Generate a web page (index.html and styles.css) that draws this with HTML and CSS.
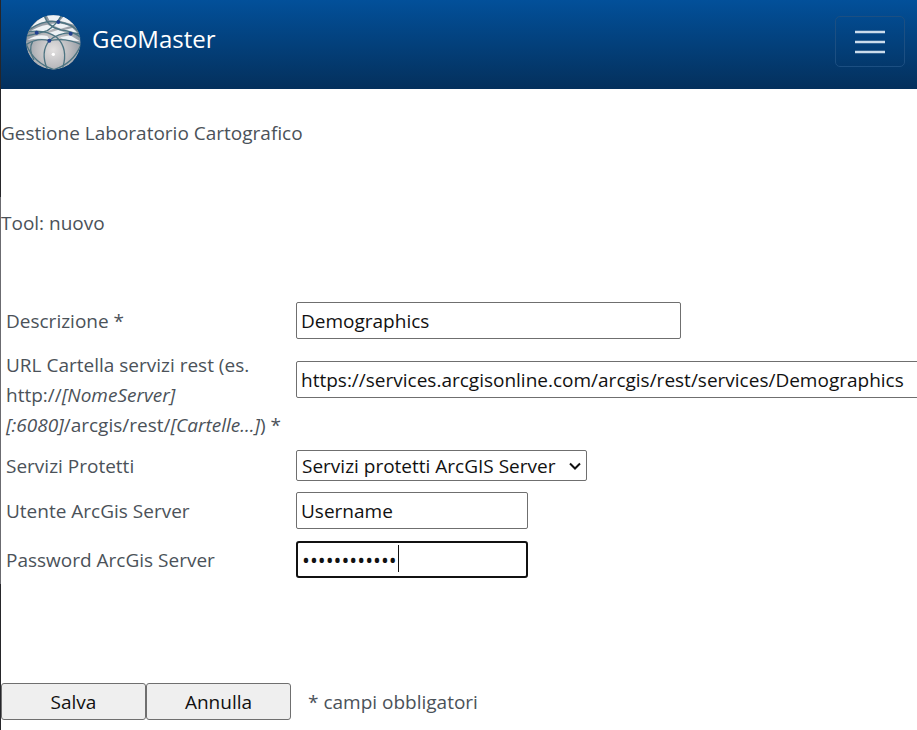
FILE: index.html
```
<!DOCTYPE html>
<html lang="it">
<head>
    <meta charset="UTF-8">
    <meta name="viewport" content="width=device-width, initial-scale=1.0">
    <title>GeoMaster</title>
    <link rel="stylesheet" href="styles.css">
</head>
<body>
    <header class="navbar">
        <a class="brand" href="#">
            <svg class="logo" viewBox="0 0 180 180" aria-hidden="true">
                <defs>
                    <radialGradient id="globe" cx="50%" cy="64%" r="60%">
                        <stop offset="0" stop-color="#e2e0e0"/>
                        <stop offset="0.5" stop-color="#bcbcbf"/>
                        <stop offset="1" stop-color="#86919c"/>
                    </radialGradient>
                    <clipPath id="disc"><circle cx="88" cy="91" r="82"/></clipPath>
                </defs>
                <g clip-path="url(#disc)">
                    <circle cx="88" cy="91" r="82" fill="url(#globe)"/>
                    <!-- light patches between the meridians -->
                    <path d="M22 46Q40 22 60 14L70 28Q45 32 22 46ZM68 10H112L100 27L76 25ZM78 36L104 33L140 42L110 50ZM120 12L150 38L108 26ZM14 62Q40 42 70 38L94 48L66 60L36 56ZM112 56L145 48L164 66L138 60ZM74 63L102 54L130 64L98 72ZM10 84Q40 64 70 72L76 82Q40 78 10 84ZM108 76L138 70L168 88L122 84Z" fill="#eef2f5"/>
                    <g fill="none" stroke="#4d7482" stroke-width="4">
                        <path d="M60 8Q70 46 112 54Q150 58 172 78"/>
                        <path d="M116 4Q98 38 70 56Q42 66 6 72"/>
                        <path d="M18 52Q58 22 103 30Q145 36 162 58"/>
                        <path d="M10 60Q62 50 98 76Q134 110 116 168"/>
                        <path d="M170 66Q112 54 76 86Q48 120 70 172"/>
                        <path d="M6 98Q40 76 76 86Q126 76 172 98"/>
                        <path d="M8 100Q30 154 90 173Q148 154 170 100"/>
                        <path d="M30 144Q12 112 26 88"/>
                    </g>
                </g>
                <circle cx="88" cy="127" r="5" fill="#fff"/>
                <g fill="#22408f">
                    <circle cx="103" cy="30" r="6"/>
                    <circle cx="38" cy="62" r="6"/>
                    <circle cx="140" cy="65" r="6"/>
                    <circle cx="76" cy="86" r="6"/>
                </g>
            </svg>
            <span>GeoMaster</span>
        </a>
        <button class="toggler" type="button" aria-label="Menu">
            <svg viewBox="0 0 30 24" aria-hidden="true">
                <path d="M0 2H30M0 12H30M0 22H30" stroke="#cbdcec" stroke-width="2.4"/>
            </svg>
        </button>
    </header>

    <main>
        <p class="title">Gestione Laboratorio Cartografico</p>
        <p class="subtitle">Tool: nuovo</p>

        <form>
            <div class="fields">
                <label for="descrizione">Descrizione *</label>
                <input class="medium" type="text" id="descrizione" value="Demographics">

                <label for="url">URL Cartella servizi rest (es. http://<i>[NomeServer]</i><br><i>[:6080]</i>/arcgis/rest/<i>[Cartelle...]</i>) *</label>
                <input class="wide" type="text" id="url" value="https://services.arcgisonline.com/arcgis/rest/services/Demographics">

                <label for="protetti">Servizi Protetti</label>
                <div class="select">
                    <select id="protetti">
                        <option>Servizi protetti ArcGIS Server</option>
                    </select>
                    <svg viewBox="0 0 12 8" aria-hidden="true">
                        <path d="M1 1.5L6 6.5L11 1.5" fill="none" stroke="#111" stroke-width="2"/>
                    </svg>
                </div>

                <label for="utente">Utente ArcGis Server</label>
                <input type="text" id="utente" value="Username">

                <label for="password">Password ArcGis Server</label>
                <div class="password">
                    <input type="password" id="password" value="abcdefghilmn">
                    <span class="caret"></span>
                </div>
            </div>

            <div class="actions">
                <button type="submit">Salva</button>
                <button type="button">Annulla</button>
                <span>* campi obbligatori</span>
            </div>
        </form>
    </main>
</body>
</html>
```
FILE: styles.css
```
* {
    box-sizing: border-box;
}
html {
    background: #fff;
}
body {
    margin: 0;
    min-height: 100vh;
    padding-left: 1px;
    background: linear-gradient(#26262a 27%, #6b6b70 27%, #6b6b70 80%, #26262a 80%) left / 1px 100% no-repeat;
    color: #4b5259;
    font-family: "Segoe UI", "Open Sans", sans-serif;
    font-size: 19px;
    line-height: 30px;
    overflow-x: hidden;
}
input, select, button {
    font: inherit;
    color: #111;
}
.navbar {
    display: flex;
    justify-content: space-between;
    align-items: flex-start;
    height: 89px;
    padding: 12px 12px 0 23px;
    background: linear-gradient(#02509a, #04305c);
}
.brand {
    display: flex;
    gap: 8px;
    color: #fff;
    font-size: 24px;
    line-height: 54px;
    text-decoration: none;
}
.logo {
    width: 60px;
    height: 60px;
}
.toggler {
    display: flex;
    justify-content: center;
    align-items: center;
    width: 70px;
    height: 51px;
    margin-top: 4px;
    padding: 0;
    background: none;
    border: 1px solid #1c4f82;
    border-radius: 5px;
}
.toggler svg {
    width: 30px;
    height: 24px;
}
.title, .subtitle {
    margin: 0;
}
.title {
    padding-top: 29px;
}
.subtitle {
    padding: 60px 0 63px;
}
.fields {
    display: grid;
    grid-template-columns: 280px 1fr;
    column-gap: 10px;
    row-gap: 10px;
    align-items: center;
    padding-left: 5px;
}
.fields input {
    width: 232px;
    height: 37px;
    margin: 1px 0;
    padding: 0 4px;
    background: #fff;
    border: 1px solid #6f6f6f;
    border-radius: 2px;
    outline: none;
}
.fields .medium {
    width: 385px;
}
.fields .wide {
    width: 640px;
    margin-top: 11px;
    align-self: start;
}
.password {
    position: relative;
    display: flex;
}
.password input {
    border: 2px solid #111;
    border-radius: 3px;
    font-size: 21px;
}
.caret {
    position: absolute;
    top: 5px;
    left: 102px;
    width: 1px;
    height: 27px;
    background: #111;
}
.select {
    position: relative;
    width: 291px;
    height: 31px;
}
.select select {
    width: 100%;
    height: 100%;
    padding: 0 5px;
    appearance: none;
    background: #fff;
    border: 1px solid #6f6f6f;
    border-radius: 2px;
}
.select svg {
    position: absolute;
    top: 12px;
    right: 6px;
    width: 12px;
    height: 8px;
    pointer-events: none;
}
.actions {
    display: flex;
    align-items: center;
    padding: 104px 0 10px;
}
.actions button {
    width: 145px;
    height: 37px;
    padding: 0;
    background: #efefef;
    border: 1px solid #6f6f6f;
    border-radius: 3px;
}
.actions span {
    padding-left: 17px;
}
```
